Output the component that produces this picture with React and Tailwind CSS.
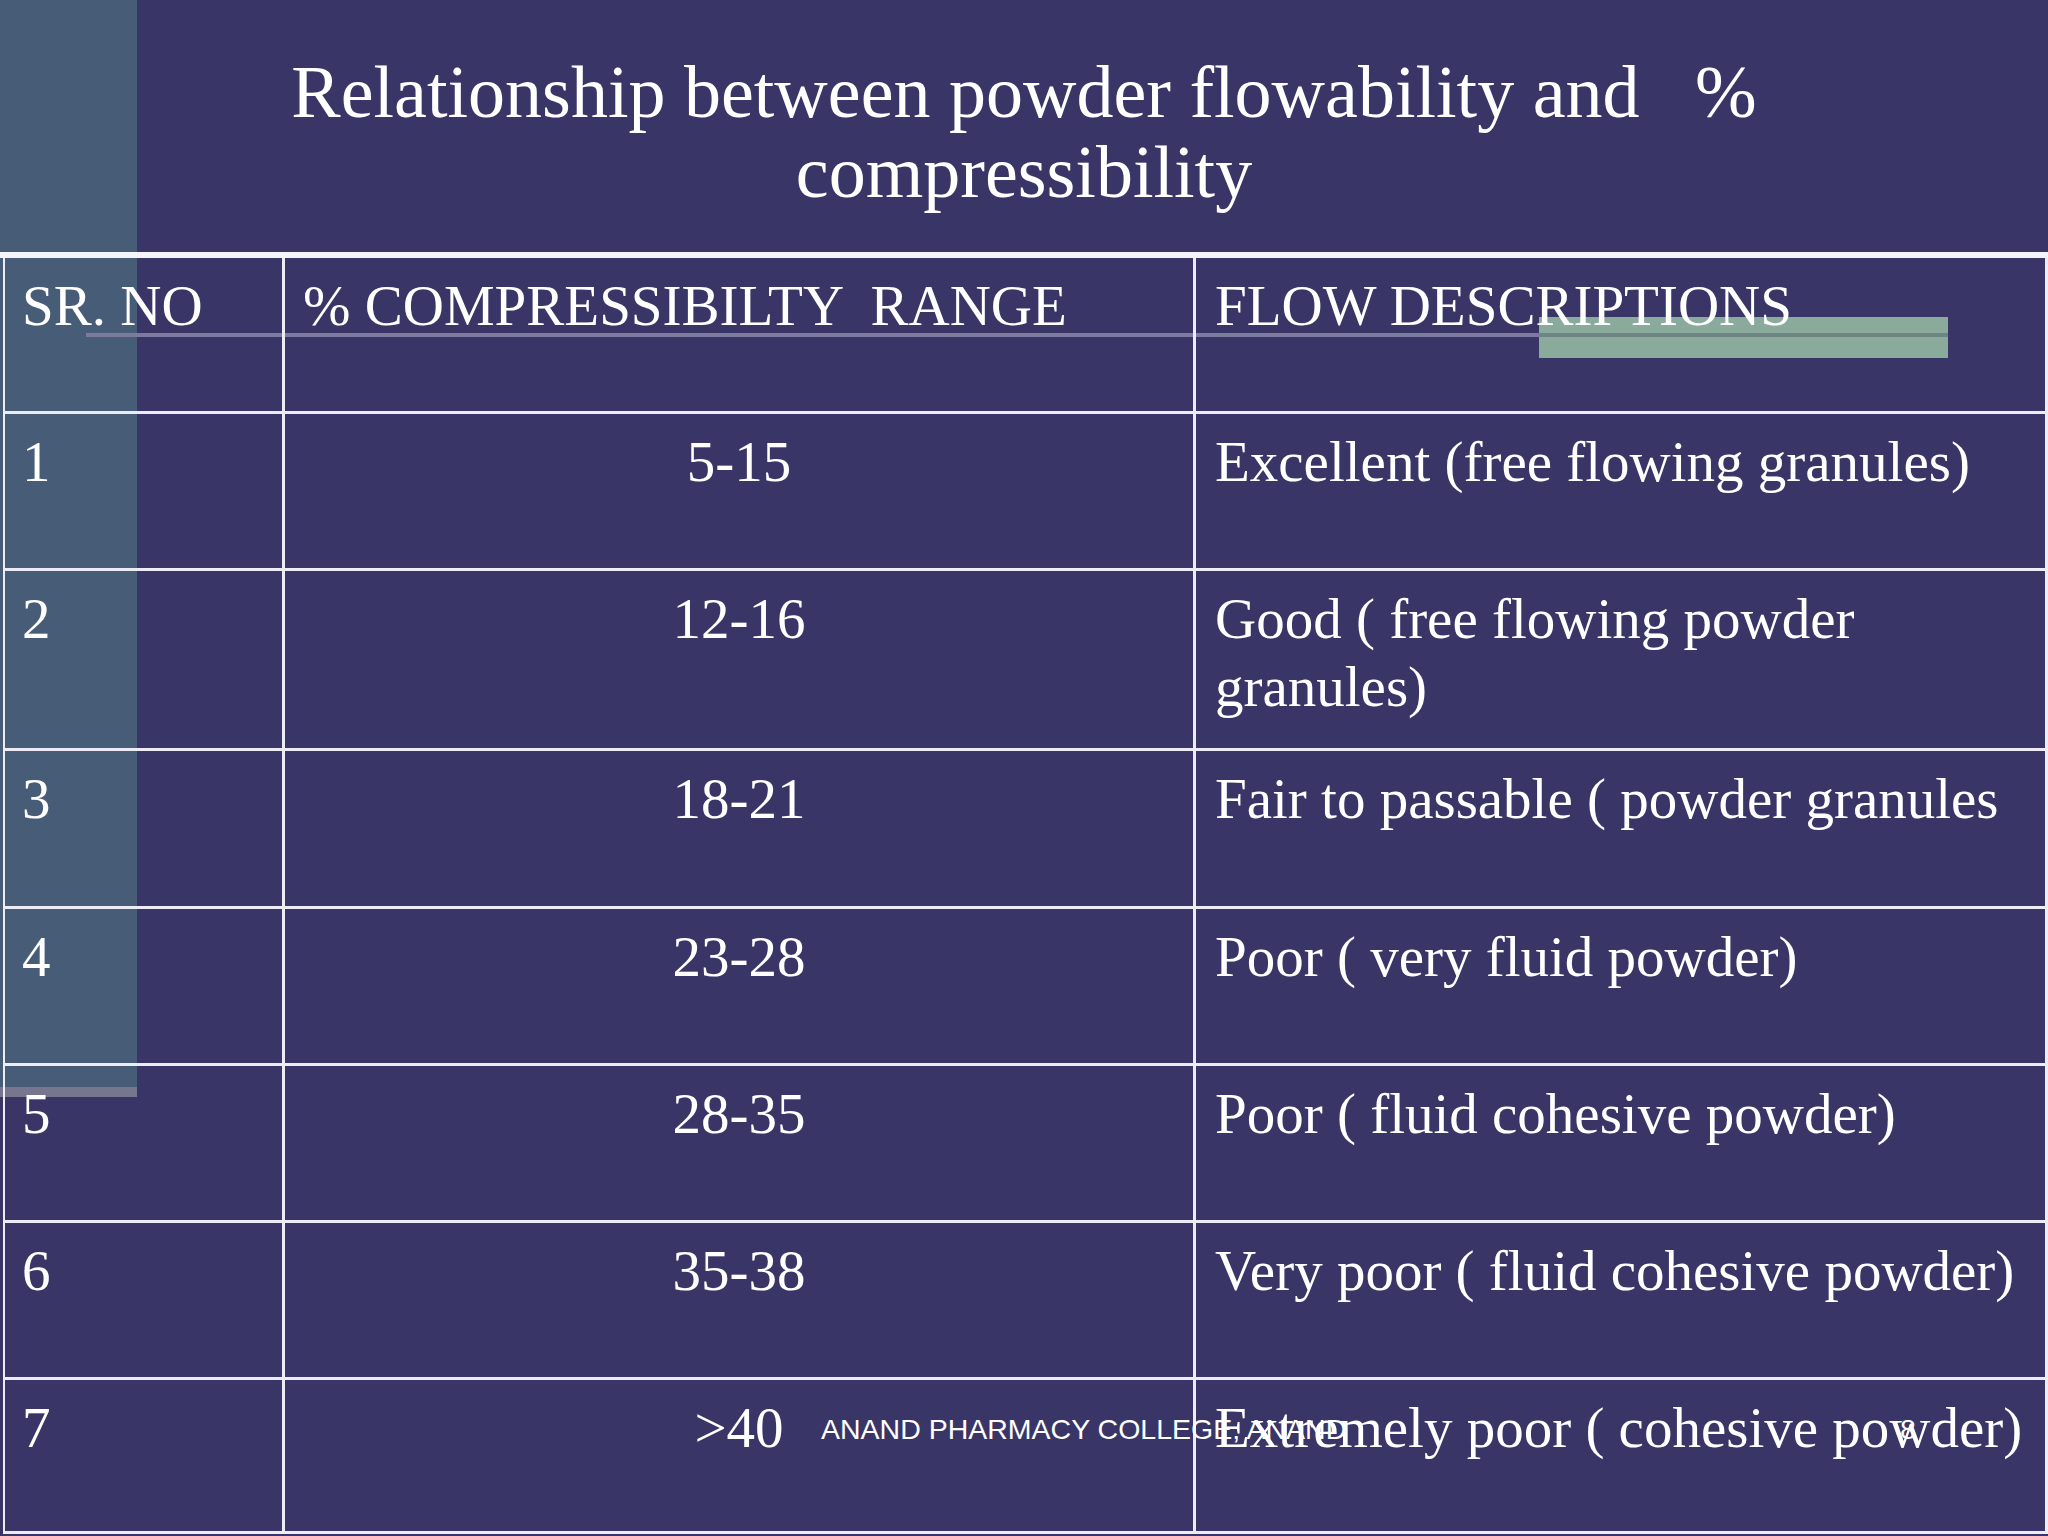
import React from "react";

const rows = [
  { no: "1", range: "5-15", desc: "Excellent (free flowing granules)", h: "h-[157px]" },
  { no: "2", range: "12-16", desc: "Good ( free flowing powder granules)", h: "h-[180px]" },
  { no: "3", range: "18-21", desc: "Fair to passable ( powder granules", h: "h-[158px]" },
  { no: "4", range: "23-28", desc: "Poor ( very fluid powder)", h: "h-[157px]" },
  { no: "5", range: "28-35", desc: "Poor ( fluid cohesive powder)", h: "h-[157px]" },
  { no: "6", range: "35-38", desc: "Very poor ( fluid cohesive powder)", h: "h-[157px]" },
  { no: "7", range: ">40", desc: "Extremely poor ( cohesive powder)", h: "h-[154px]" },
];

const serif = { fontFamily: '"Liberation Serif", "Times New Roman", serif' };
const sans = { fontFamily: '"Liberation Sans", Arial, sans-serif' };

function Cell({ children, className = "" }) {
  return (
    <div className={`border-r-[3px] border-b-[3px] border-[#ecebf6] pt-[14px] text-[57px] leading-[68px] ${className}`}>
      {children}
    </div>
  );
}

export default function App() {
  return (
    <div className="relative w-[2048px] h-[1536px] overflow-hidden bg-[#393567] text-white" style={serif}>
      {/* master slide decorations */}
      <div className="absolute left-0 top-0 w-[137px] h-[1087px] bg-[#475c76]" />
      <div className="absolute left-0 top-[1087px] w-[137px] h-[10px] bg-[#77768f]" />

      <div className="relative">
        <div className="h-[252px] pt-[52px] text-center text-[74px] leading-[80px] whitespace-pre">
          <div>{"Relationship between powder flowability and   %"}</div>
          <div>compressibility</div>
        </div>
        <div className="h-[6px] bg-[#f4f4fb]" />

        <div className="relative ml-[3px] w-[2045px] border-l-2 border-[#ecebf6] grid grid-cols-[280px_911px_852px]">
          <div className="absolute left-[81px] top-[75px] w-[1862px] h-[4px] bg-[#7c7b9d]" />
          <div className="absolute left-[1534px] top-[59px] w-[409px] h-[41px] bg-[#8aab9c]" />
          <div className="absolute left-[1534px] top-[75px] w-[409px] h-[4px] bg-[#6e8487]" />

          <Cell className="relative h-[156px] pl-[17px]">SR. NO</Cell>
          <Cell className="relative h-[156px] pl-[18px] whitespace-pre">{"% COMPRESSIBILTY  RANGE"}</Cell>
          <Cell className="relative h-[156px] pl-[19px]">FLOW DESCRIPTIONS</Cell>

          {rows.map((r) => (
            <React.Fragment key={r.no}>
              <Cell className={`${r.h} pl-[17px]`}>{r.no}</Cell>
              <Cell className={`${r.h} text-center`}>{r.range}</Cell>
              <Cell className={`${r.h} pl-[19px] pr-[6px]`}>{r.desc}</Cell>
            </React.Fragment>
          ))}
        </div>
      </div>

      {/* footer and slide number sit over the last row */}
      <div className="absolute left-[821px] top-[1415px] text-[28.5px] leading-[28px] whitespace-nowrap" style={sans}>
        ANAND PHARMACY COLLEGE, ANAND
      </div>
      <div className="absolute left-[1900px] top-[1415px] text-[28.5px] leading-[28px]" style={sans}>
        8
      </div>
    </div>
  );
}
